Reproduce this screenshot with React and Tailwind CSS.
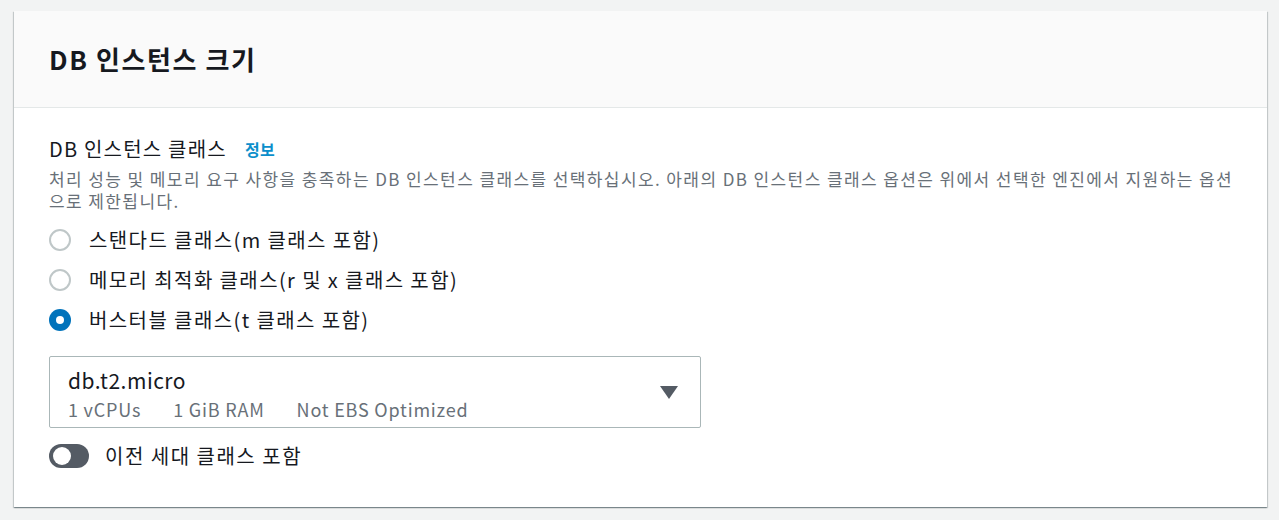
import React from "react";

const font = { fontFamily: '"Noto Sans CJK KR", "Noto Sans", sans-serif' };

function Radio({ checked, label }) {
  return (
    <div className="flex items-center h-[40px]">
      {checked ? (
        <span className="w-[22px] h-[22px] rounded-full bg-[#0073bb] flex items-center justify-center shrink-0">
          <span className="w-[8px] h-[8px] rounded-full bg-white" />
        </span>
      ) : (
        <span className="w-[22px] h-[22px] rounded-full border-2 border-[#bfc7c8] bg-white shrink-0" />
      )}
      <span className="ml-[18px] text-[20px] leading-[24px] tracking-[1.4px] text-[#16191f]">{label}</span>
    </div>
  );
}

export default function App() {
  return (
    <div className="w-[1279px] h-[520px] bg-[#f2f3f3] pl-[14px] pr-[12px] pt-[11px]" style={font}>
      <div className="bg-white h-[496px] shadow-[0_1px_1px_0_rgba(0,28,36,0.3),1px_1px_1px_0_rgba(0,28,36,0.15),-1px_1px_1px_0_rgba(0,28,36,0.15)]">
        <div className="h-[97px] bg-[#fafafa] border-b border-[#e4e8e8] flex items-center px-[35px]">
          <h2 className="text-[26px] font-bold tracking-[1.6px] text-[#16191f] leading-[30px]">DB 인스턴스 크기</h2>
        </div>
        <div className="px-[35px] pt-[29px]">
          <div className="flex items-center h-[24px]">
            <span className="text-[20px] leading-[24px] tracking-[1.2px] text-[#16191f]">DB 인스턴스 클래스</span>
            <span className="ml-[18px] text-[16px] font-bold tracking-[0.5px] text-[#0b8fcb]">정보</span>
          </div>
          <p className="mt-[7px] text-[17px] leading-[22px] tracking-[1.4px] text-[#687078] whitespace-nowrap">
            처리 성능 및 메모리 요구 사항을 충족하는 DB 인스턴스 클래스를 선택하십시오. 아래의 DB 인스턴스 클래스 옵션은 위에서 선택한 엔진에서 지원하는 옵션
            <br />
            으로 제한됩니다.
          </p>
          <div className="mt-[8px] flex flex-col">
            <Radio label="스탠다드 클래스(m 클래스 포함)" />
            <Radio label="메모리 최적화 클래스(r 및 x 클래스 포함)" />
            <Radio checked label="버스터블 클래스(t 클래스 포함)" />
          </div>
          <div className="mt-[16px] w-[652px] h-[72px] border border-[#aab7b8] rounded-[2px] flex items-center justify-between pl-[18px] pr-[22px]">
            <div className="flex flex-col self-start pt-[10px]">
              <span className="text-[21px] leading-[26px] tracking-[0.5px] text-[#16191f]">db.t2.micro</span>
              <div className="mt-[4px] flex text-[18px] leading-[24px] tracking-[0.8px] text-[#687078] gap-[32px]">
                <span>1 vCPUs</span>
                <span>1 GiB RAM</span>
                <span>Not EBS Optimized</span>
              </div>
            </div>
            <svg width="18" height="13" viewBox="0 0 18 13">
              <path d="M0 0 H18 L9 13 Z" fill="#545b64" />
            </svg>
          </div>
          <div className="mt-[15px] flex items-center h-[26px]">
            <span className="w-[40px] h-[24px] rounded-full bg-[#545b64] flex items-center pl-[4px] shrink-0">
              <span className="w-[18px] h-[18px] rounded-full bg-white" />
            </span>
            <span className="ml-[16px] text-[20px] leading-[24px] tracking-[1.5px] text-[#16191f]">이전 세대 클래스 포함</span>
          </div>
        </div>
      </div>
    </div>
  );
}
